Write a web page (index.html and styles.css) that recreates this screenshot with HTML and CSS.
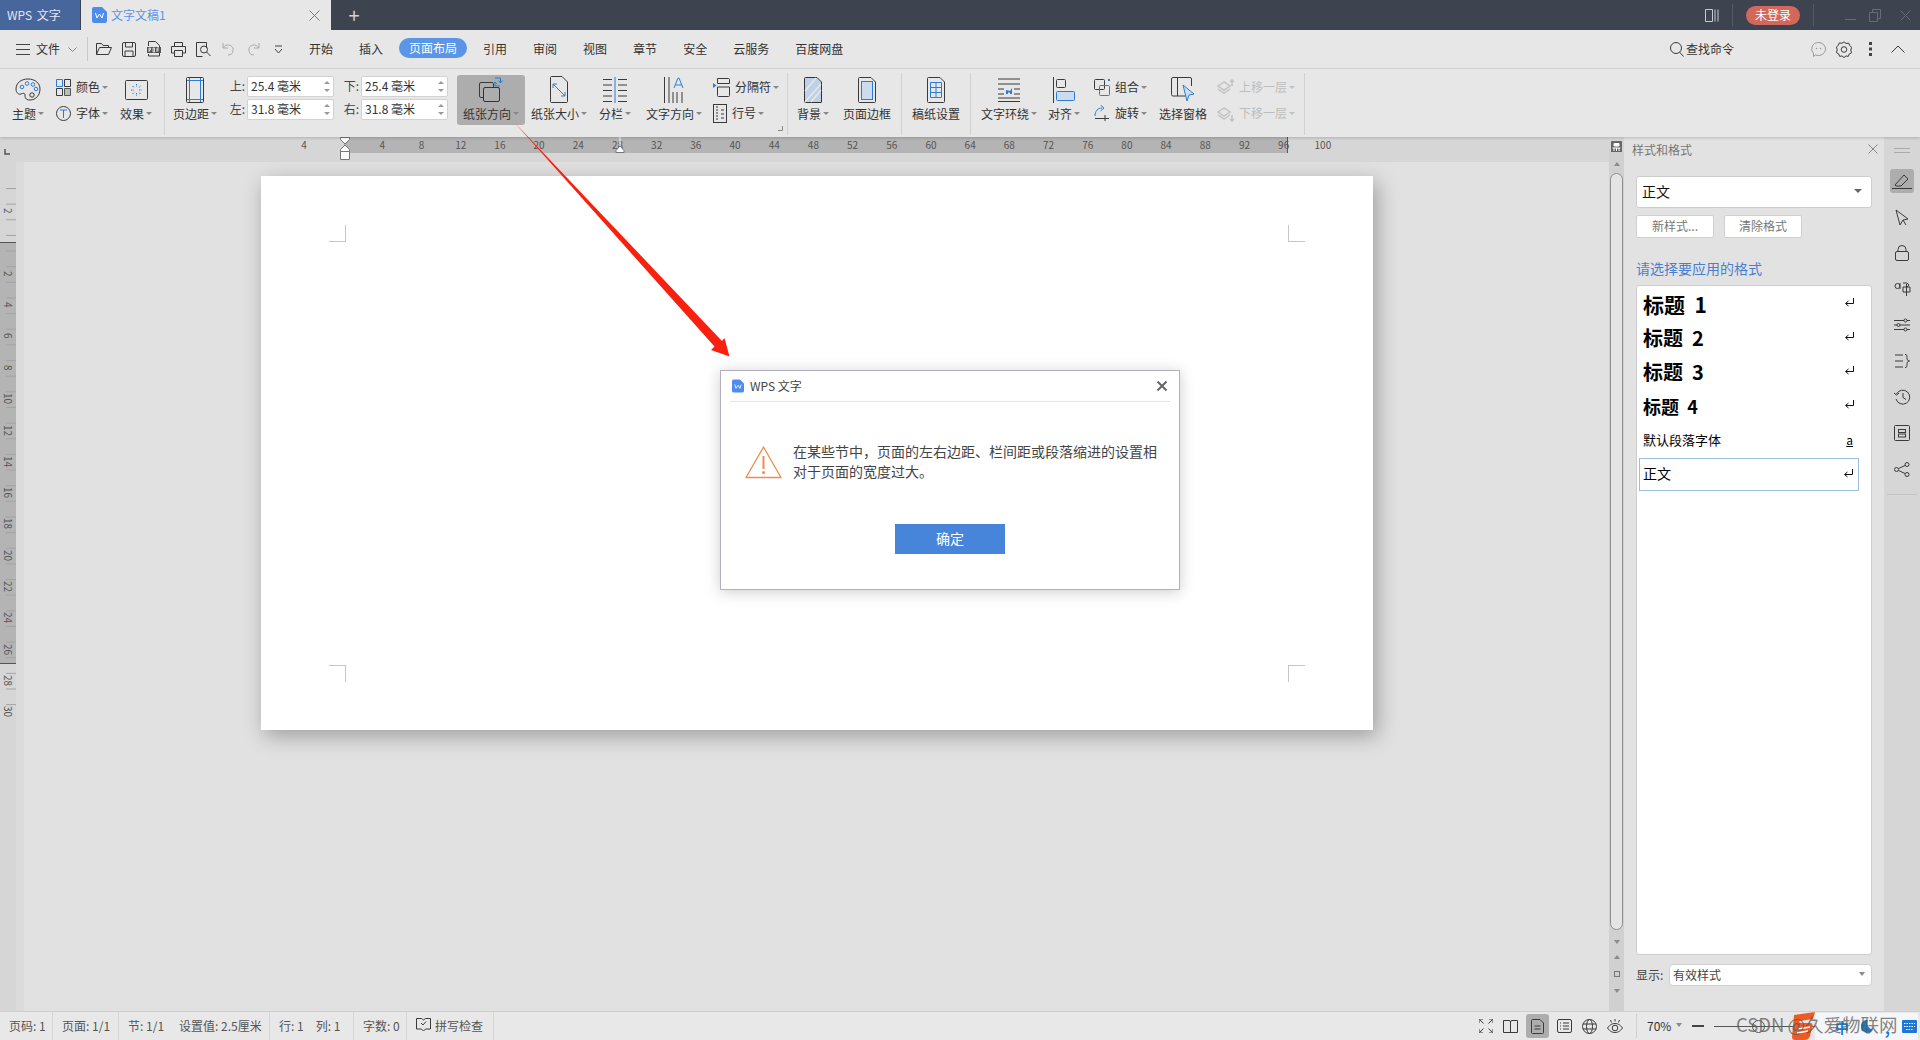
FILE: index.html
```html
<!DOCTYPE html>
<html lang="zh-CN">
<head>
<meta charset="UTF-8" />
<title>WPS 文字</title>
<link rel="stylesheet" href="styles.css">
</head>
<body>

<div class="titlebar">
  <div class="app-tab">WPS 文字</div>
  <div class="doc-tab">
    <svg class="wdoc" width="15" height="16" viewBox="0 0 15 16"><path d="M2 0h8l5 5v9a2 2 0 0 1-2 2H2a2 2 0 0 1-2-2V2a2 2 0 0 1 2-2z" fill="#4f8bec"/><path d="M3.500 6l1.500 5 2.500-4 2.500 4 1.500-5" fill="none" stroke="#fff"/></svg>
    <span class="doc-name">文字文稿1</span>
    <svg class="doc-close" width="11" height="11" viewBox="0 0 11 11"><path d="M.5.5l10 10M10.500.5l-10 10" stroke="#777" fill="none"/></svg>
  </div>
  <div class="new-tab">+</div>
  <div class="title-right">
    <svg width="14" height="15" viewBox="0 0 14 15"><path d="M.5 1.500h7v12h-7zM10 1.500v12M13 1.500v12" fill="none" stroke="#c6c9d0"/></svg>
    <i class="title-sep sep-a"></i>
    <div class="login">未登录</div>
    <i class="title-sep sep-b"></i>
    <svg width="11" height="11" viewBox="0 0 11 11"><path d="M0 9.500h11" stroke="#666b77"/></svg>
    <svg class="win-b" width="12" height="13" viewBox="0 0 12 13"><path d="M.5 3.500h8v9h-8zM3.500 3V.5h8v9H9" fill="none" stroke="#666b77"/></svg>
    <svg class="win-c" width="11" height="11" viewBox="0 0 11 11"><path d="M.5.5l10 10M10.500.5l-10 10" stroke="#666b77" fill="none"/></svg>
  </div>
</div>

<div class="menubar">
  <svg class="hamb" width="14" height="11" viewBox="0 0 14 11"><path d="M0 .5h14M0 5.500h14M0 10.500h14" stroke="#444"/></svg>
  <span class="file-label">文件</span>
  <svg class="file-chev" width="9" height="5" viewBox="0 0 9 5"><path d="M.5.5l4 4 4-4" fill="none" stroke="#888"/></svg>
  <i class="menu-sep"></i>
  <div class="quick">
    <svg width="16" height="14" viewBox="0 0 16 14"><path d="M.5 12.500V1.500h5l1.500 2h5.500v2M.5 12.500l3-7h12l-3 7z" class="ln"/></svg>
    <svg width="14" height="15" viewBox="0 0 14 15"><path d="M.5 2a1.500 1.500 0 0 1 1.500-1.500h10a1.500 1.500 0 0 1 1.500 1.500v11a1.500 1.500 0 0 1-1.500 1.500h-10a1.500 1.500 0 0 1-1.500-1.500zM3.500 1v4h7V1M3 14V9h8v5" class="ln"/></svg>
    <svg width="14" height="16" viewBox="0 0 14 16"><path d="M1.500 5V.5h7l4 4V15h-11v-2" class="ln"/><path d="M0 6h14v6H0z" fill="#555"/><path d="M2 11V7h1.500v2H2M6 7v4h1.500V7zM10 11V7h2M10 9h2" fill="none" stroke="#fff" stroke-width=".8"/></svg>
    <svg width="15" height="15" viewBox="0 0 15 15"><path d="M3.500 4.500V.5h8v4M3.500 11H.5V4.500h14V11h-3M3.500 8.500h8v6h-8z" class="ln"/></svg>
    <svg width="15" height="15" viewBox="0 0 15 15"><path d="M10.500 6V.5h-10v14h6" class="ln"/><circle cx="8" cy="7.500" r="3.500" class="ln"/><path d="M10.500 10l4 4" class="ln"/></svg>
    <svg width="13" height="14" viewBox="0 0 13 14"><path d="M1 1v5h5M1.500 6A5 5 0 1 1 6 13" fill="none" stroke="#aaa"/></svg>
    <svg width="13" height="14" viewBox="0 0 13 14"><path d="M12 1v5H7M11.500 6A5 5 0 1 0 7 13" fill="none" stroke="#aaa"/></svg>
    <svg width="9" height="9" viewBox="0 0 9 9"><path d="M1 1h7M1 4l3.500 4L8 4" fill="none" stroke="#444"/></svg>
  </div>
  <div class="tabs">
    <span>开始</span><span>插入</span><span class="tab-on">页面布局</span><span>引用</span><span>审阅</span><span>视图</span><span>章节</span><span>安全</span><span>云服务</span><span>百度网盘</span>
  </div>
  <div class="menu-right">
    <svg width="14" height="15" viewBox="0 0 14 15"><circle cx="6" cy="6" r="5.500" class="ln"/><path d="M9.500 10l4 4.500" class="ln"/></svg>
    <span class="find">查找命令</span>
    <svg class="mr-a" width="15" height="15" viewBox="0 0 15 15"><path d="M7.500.5a7 6.500 0 0 1 0 13c-1 0-2-.2-3-.6L2.500 14.500v-3A6.500 6.500 0 0 1 7.500.5z" fill="none" stroke="#999"/><circle cx="5.500" cy="6.500" r=".8" fill="#999"/><circle cx="9.500" cy="6.500" r=".8" fill="#999"/></svg>
    <svg class="mr-b" width="16" height="17" viewBox="0 0 16 17"><path d="M8 .8l2 1.700 2.700-.4 1 2.500 2 1.700-1 2.700 1 2.700-2.400 1.200-1 2.500-2.300-.5-2 1.700-2-1.700-2.300.5-1-2.500L.3 11.500l1-2.700-1-2.700 2-1.700 1-2.500 2.700.4z" class="ln"/><circle cx="8" cy="8.500" r="2.800" class="ln"/></svg>
    <svg class="mr-c" width="3" height="14" viewBox="0 0 3 14"><path d="M0 0h3v3H0zM0 5.500h3v3H0zM0 11h3v3H0z" fill="#444"/></svg>
    <svg class="mr-d" width="14" height="8" viewBox="0 0 14 8"><path d="M.5 7.500L7 1l6.500 6.500" class="ln"/></svg>
  </div>
</div>

<div class="ribbon">
  <div class="big g-theme">
    <div class="icon"><svg width="26" height="24" viewBox="0 0 26 24"><path d="M13 1C6 1 1 5 1 11c0 4 3 6 5 5s4-1 4 1 0 5 5 5c6 0 10-5 10-11S20 1 13 1z" class="ln"/><circle cx="7" cy="9" r="1.800" class="lb"/><circle cx="12" cy="5.500" r="1.800" class="lb"/><circle cx="18" cy="6.500" r="1.800" class="lb"/><circle cx="21" cy="11" r="1.800" class="lb"/><circle cx="17" cy="17" r="2.200" class="ln"/></svg></div>
    <div class="lbl">主题<b></b></div>
  </div>
  <div class="col g-color">
    <div class="row"><svg width="15" height="17" viewBox="0 0 15 17"><path d="M.5.5h6v7h-6z" class="lb"/><path d="M8.500.5h6v7h-6zM.5 9.500h6v7h-6z" class="ln"/><path d="M8.500 9.500h6v7h-6z" fill="#bbb" stroke="#555"/></svg><span>颜色</span><b></b></div>
    <div class="row"><svg width="15" height="15" viewBox="0 0 15 15"><circle cx="7.500" cy="7.500" r="7" class="ln"/><path d="M4 4h7M7.500 4v8" class="lb"/></svg><span>字体</span><b></b></div>
  </div>
  <div class="big g-effect">
    <div class="icon"><svg width="23" height="20" viewBox="0 0 23 20"><rect x=".5" y=".5" width="22" height="19" rx="1" class="ln"/><path d="M11.500 4v3M11.500 13v3M6 10h3M14 10h3M7.500 6l2 2M15.500 6l-2 2M7.500 14l2-2M15.500 14l-2-2" class="lb" stroke-dasharray="1.500 1"/></svg></div>
    <div class="lbl">效果<b></b></div>
  </div>
  <i class="vsep s-1"></i>
  <div class="big g-margin">
    <div class="icon"><svg width="18" height="26" viewBox="0 0 18 26"><rect x=".5" y=".5" width="17" height="25" rx="1" class="ln"/><path d="M3.500 1v24M14.500 1v24M1 3.500h16M1 22.500h16" class="lb"/></svg></div>
    <div class="lbl">页边距<b></b></div>
  </div>
  <div class="margins">
    <label>上:</label><div class="spin">25.4 毫米<em></em></div>
    <label>下:</label><div class="spin">25.4 毫米<em></em></div>
    <label>左:</label><div class="spin">31.8 毫米<em></em></div>
    <label>右:</label><div class="spin">31.8 毫米<em></em></div>
  </div>
  <div class="big g-orient on">
    <div class="icon"><svg width="24" height="26" viewBox="0 0 24 26"><rect x=".5" y="5.500" width="14" height="15" rx="1.500" class="ln"/><rect x="4.500" y="10.500" width="16" height="14" rx="1.500" fill="#adadad" stroke="#333"/><path d="M16 1h5.500v5M19.500 3.500l2 2.500 2-2.500M21 9h-5V5M14 7l2-2 2 2" class="lb"/></svg></div>
    <div class="lbl">纸张方向<b></b></div>
  </div>
  <div class="big g-size">
    <div class="icon"><svg width="18" height="27" viewBox="0 0 18 27"><path d="M.5 1.500a1 1 0 0 1 1-1H12l5.500 5.500v19.500a1 1 0 0 1-1 1h-15a1 1 0 0 1-1-1z" class="ln"/><path d="M3 8l12 12M3 8v4M3 8h4M15 20v-4M15 20h-4" class="lb"/></svg></div>
    <div class="lbl">纸张大小<b></b></div>
  </div>
  <div class="big g-cols">
    <div class="icon"><svg width="24" height="26" viewBox="0 0 24 26"><path d="M0 2.500h9M0 8h9M0 13.500h9M0 19h9M0 24.500h9M15 2.500h9M15 8h9M15 13.500h9M15 19h9M15 24.500h9" class="ln"/><path d="M12 0v26" class="lb"/></svg></div>
    <div class="lbl">分栏<b></b></div>
  </div>
  <div class="big g-dir">
    <div class="icon"><svg width="20" height="26" viewBox="0 0 20 26"><path d="M.5 0v26M5 0v26M13 15v11M18 15v11M9 15v11" class="ln"/><path d="M10 11l4-10h1l4 10M11.500 8h6" class="lb"/></svg></div>
    <div class="lbl">文字方向<b></b></div>
  </div>
  <div class="col g-break">
    <div class="row"><svg width="17" height="19" viewBox="0 0 17 19"><path d="M4.500.5h11a1 1 0 0 1 1 1v4h-12zM4.500 9h12v8.500a1 1 0 0 1-1 1h-10a1 1 0 0 1-1-1z" class="ln"/><path d="M0 5l3.500 2.500L0 10z" fill="#2b7cd3"/></svg><span>分隔符</span><b></b></div>
    <div class="row"><svg width="14" height="19" viewBox="0 0 14 19"><rect x=".5" y=".5" width="13" height="18" class="ln"/><path d="M3 3h2M3 6h2M3 9h2M3 12h2M3 15h2M8 6h3M8 10h3M8 14h3" class="ln"/></svg><span>行号</span><b></b></div>
    <svg class="launcher" width="5" height="5" viewBox="0 0 5 5"><path d="M4.500 0v4.500H0" fill="none" stroke="#888"/></svg>
  </div>
  <i class="vsep s-2"></i>
  <div class="big g-bg">
    <div class="icon"><svg width="18" height="26" viewBox="0 0 18 26"><path d="M.5 1.500a1 1 0 0 1 1-1H13l4.500 4.500v20a.5.5 0 0 1-.5.500H1.500a1 1 0 0 1-1-1z" fill="#bfd1e6" stroke="#333"/><path d="M1 14L12 1M1 25L17 7M7 25l10-12" stroke="#e8e8e8" stroke-width="1.500"/></svg></div>
    <div class="lbl">背景<b></b></div>
  </div>
  <div class="big g-border">
    <div class="icon"><svg width="18" height="26" viewBox="0 0 18 26"><path d="M.5 1.500a1 1 0 0 1 1-1H13l4.500 4.500v19.500a1 1 0 0 1-1 1h-15a1 1 0 0 1-1-1z" class="ln"/><rect x="3.500" y="4.500" width="11" height="18" fill="#cbdcee" stroke="#2b7cd3"/></svg></div>
    <div class="lbl">页面边框</div>
  </div>
  <i class="vsep s-3"></i>
  <div class="big g-paper">
    <div class="icon"><svg width="18" height="26" viewBox="0 0 18 26"><path d="M.5 1.500a1 1 0 0 1 1-1H13l4.500 4.500v19.500a1 1 0 0 1-1 1h-15a1 1 0 0 1-1-1z" class="ln"/><path d="M3.500 5.500h11v15h-11zM3.500 10.500h11M3.500 15.500h11M9 5.500v15" class="lb"/></svg></div>
    <div class="lbl">稿纸设置</div>
  </div>
  <i class="vsep s-4"></i>
  <div class="big g-wrap">
    <div class="icon"><svg width="22" height="24" viewBox="0 0 22 24"><path d="M0 1h22M0 6h22M0 11h6M16 11h6M0 16h6M16 16h6M0 20h22M0 23.500h22" class="ln"/><path d="M8 16v-4l4 1 2-3v6h-2v-1.500H10V16z" fill="#2b7cd3"/></svg></div>
    <div class="lbl">文字环绕<b></b></div>
  </div>
  <div class="big g-align">
    <div class="icon"><svg width="22" height="26" viewBox="0 0 22 26"><path d="M.5 0v26" class="ln"/><rect x="3.500" y="2.500" width="9" height="8" rx="1" class="ln"/><rect x="3.500" y="14.500" width="18" height="9" rx="1" fill="#cbdcee" stroke="#2b7cd3"/></svg></div>
    <div class="lbl">对齐<b></b></div>
  </div>
  <div class="col g-group">
    <div class="row"><svg width="16" height="17" viewBox="0 0 16 17"><rect x=".5" y=".5" width="10" height="10" rx="1" class="ln"/><rect x="5.500" y="6.500" width="10" height="10" rx="1" class="lb"/><path d="M14 0h2v2h-2z" fill="#2b7cd3"/></svg><span>组合</span><b></b></div>
    <div class="row"><svg width="16" height="17" viewBox="0 0 16 17"><path d="M1 11C1 6 4 3 8 3" class="lb"/><path d="M6.500 0L10 3 6.500 6" class="lb"/><path d="M1 13.500h14M11 10v6" class="ln"/></svg><span>旋转</span><b></b></div>
  </div>
  <div class="big g-pane">
    <div class="icon"><svg width="24" height="26" viewBox="0 0 24 26"><path d="M15 19H2a1.500 1.500 0 0 1-1.500-1.500V2A1.500 1.500 0 0 1 2 .5h17A1.500 1.500 0 0 1 20.500 2v7M6.500 1v18" class="ln"/><path d="M12 8l11 9-5 1-2 6z" fill="#cbdcee" stroke="#2b7cd3"/></svg></div>
    <div class="lbl">选择窗格</div>
  </div>
  <div class="col g-layer">
    <div class="row off"><svg width="17" height="17" viewBox="0 0 17 17"><path d="M7 3L1 7l6 4 6-4zM1 10l6 4 6-4M15 1v6M13 3l2-2 2 2" fill="none" stroke="#c2c2c2" stroke-width="1.500"/></svg><span>上移一层</span><b></b></div>
    <div class="row off"><svg width="17" height="17" viewBox="0 0 17 17"><path d="M7 3L1 7l6 4 6-4zM1 10l6 4 6-4M15 10v6M13 14l2 2 2-2" fill="none" stroke="#c2c2c2" stroke-width="1.500"/></svg><span>下移一层</span><b></b></div>
  </div>
  <i class="vsep s-5"></i>
</div>

<div class="workspace">
  <div class="editor">
    <div class="hruler">
      <div class="hnums"><span>4</span><span></span><span>4</span><span>8</span><span>12</span><span>16</span><span>20</span><span>24</span><span>28</span><span>32</span><span>36</span><span>40</span><span>44</span><span>48</span><span>52</span><span>56</span><span>60</span><span>64</span><span>68</span><span>72</span><span>76</span><span>80</span><span>84</span><span>88</span><span>92</span><span>96</span><span>100</span></div>
      <svg class="tabmark" width="6" height="6" viewBox="0 0 6 6"><path d="M1 0v5h5" fill="none" stroke="#555" stroke-width="1.500"/></svg>
      <svg class="indent-a" width="10" height="23" viewBox="0 0 10 23"><path d="M.5.5h9v2L5 7 .5 2.500zM.5 12.500L5 8l4.500 4.500v2h-9zM.5 14.500h9v8h-9z" fill="#fff" stroke="#777"/></svg>
      <svg class="indent-b" width="10" height="16" viewBox="0 0 10 16"><path d="M5 0v9" stroke="#fff"/><path d="M1 15.500v-2L5 9l4 4.500v2z" fill="#fff" stroke="#777"/></svg>
    </div>
    <div class="main">
      <div class="vruler">
        <div class="vnums"><span>2</span><span></span><span>2</span><span>4</span><span>6</span><span>8</span><span>10</span><span>12</span><span>14</span><span>16</span><span>18</span><span>20</span><span>22</span><span>24</span><span>26</span><span>28</span><span>30</span></div>
      </div>
      <div class="doc">
        <div class="page">
          <div class="corners top"><i class="c-tl"></i><i class="c-tr"></i></div>
          <div class="corners bottom"><i class="c-bl"></i><i class="c-br"></i></div>
        </div>
      </div>
    </div>
  </div>

  <div class="scroll">
    <div class="split"><svg width="11" height="12" viewBox="0 0 11 12"><rect width="11" height="12" rx="1" fill="#666"/><path d="M3 2.500h5v2.500H3zM1.500 7h8M3 7v3M5.500 7v3M8 7v3" stroke="#fff" fill="#fff"/></svg></div>
    <div class="track">
      <i class="tri up"></i>
      <div class="thumb"></div>
      <i class="tri down"></i>
      <i class="tri dbl-up"></i>
      <i class="dot"></i>
      <i class="tri dbl-down"></i>
    </div>
  </div>

  <aside class="panel">
    <div class="panel-head"><span>样式和格式</span><svg width="10" height="10" viewBox="0 0 10 10"><path d="M.5.5l9 9M9.500.5l-9 9" stroke="#888" fill="none"/></svg></div>
    <div class="style-select"><span>正文</span><i class="tri down dark"></i></div>
    <div class="panel-btns"><button>新样式...</button><button>清除格式</button></div>
    <div class="panel-title">请选择要应用的格式</div>
    <div class="style-list">
      <div class="style-row h1"><span>标题  1</span><svg width="10" height="9" viewBox="0 0 10 9"><path d="M9.500 0v5.500H2M4.500 3L1.500 5.500l3 2.500" fill="none" stroke="#111"/></svg></div>
      <div class="style-row h2"><span>标题  2</span><svg width="10" height="9" viewBox="0 0 10 9"><path d="M9.500 0v5.500H2M4.500 3L1.500 5.500l3 2.500" fill="none" stroke="#111"/></svg></div>
      <div class="style-row h3"><span>标题  3</span><svg width="10" height="9" viewBox="0 0 10 9"><path d="M9.500 0v5.500H2M4.500 3L1.500 5.500l3 2.500" fill="none" stroke="#111"/></svg></div>
      <div class="style-row h4"><span>标题  4</span><svg width="10" height="9" viewBox="0 0 10 9"><path d="M9.500 0v5.500H2M4.500 3L1.500 5.500l3 2.500" fill="none" stroke="#111"/></svg></div>
      <div class="style-row plain"><span>默认段落字体</span><u>a</u></div>
      <div class="style-row current"><span>正文</span><svg width="10" height="9" viewBox="0 0 10 9"><path d="M9.500 0v5.500H2M4.500 3L1.500 5.500l3 2.500" fill="none" stroke="#111"/></svg></div>
    </div>
    <div class="show-row"><label>显示:</label><div class="show-select"><span>有效样式</span><i class="tri down"></i></div></div>
  </aside>

  <nav class="strip">
    <div class="strip-grip"></div>
    <div class="strip-btn on"><svg width="20" height="15" viewBox="0 0 20 15"><path d="M3 11L12 1l4 4-7 7H4zM0 14.500h20" class="ln"/></svg></div>
    <div class="strip-btn"><svg width="14" height="17" viewBox="0 0 14 17"><path d="M1 1l12 9-5 1-3 5z M8 11l3 5" class="ln"/></svg></div>
    <div class="strip-btn"><svg width="14" height="16" viewBox="0 0 14 16"><rect x=".5" y="6.500" width="13" height="9" rx="1.500" class="ln"/><path d="M3 6.500V4.500a4 4 0 0 1 8 0v2" class="ln"/></svg></div>
    <div class="strip-btn"><svg width="17" height="16" viewBox="0 0 17 16"><circle cx="3.500" cy="5" r="2.500" class="ln"/><path d="M6 2v6M9 6h7v5H9zM12.500 3v12M9 2h4l2 2-2 2" class="ln"/></svg></div>
    <div class="strip-btn"><svg width="16" height="14" viewBox="0 0 16 14"><path d="M0 2.500h10M13 2.500h3M0 7h3M6 7h10M0 11.500h10M13 11.500h3" class="ln"/><circle cx="11.500" cy="2.500" r="1.500" class="ln"/><circle cx="4.500" cy="7" r="1.500" class="ln"/><circle cx="11.500" cy="11.500" r="1.500" class="ln"/></svg></div>
    <div class="strip-btn"><svg width="15" height="14" viewBox="0 0 15 14"><path d="M0 1h8M0 7h8M0 13h8M10 .5c2 0 2 1 2 3s0 3 2.500 3.500C12 7.500 12 8.500 12 10.500s0 3-2 3" class="ln"/></svg></div>
    <div class="strip-btn"><svg width="17" height="16" viewBox="0 0 17 16"><path d="M2.500 5a7 7 0 1 1-.500 5M0 4l2.500 2L5 4M9 4v4.500l3 2" class="ln"/></svg></div>
    <div class="strip-btn"><svg width="16" height="16" viewBox="0 0 16 16"><path d="M3 .5H1.500a1 1 0 0 0-1 1v13a1 1 0 0 0 1 1H3M13 .5h1.500a1 1 0 0 1 1 1v13a1 1 0 0 1-1 1H13M3 .5h10M3 15.500h10" class="ln"/><rect x="4.500" y="4.500" width="7" height="3" class="ln"/><rect x="4.500" y="9" width="7" height="3" class="ln"/></svg></div>
    <div class="strip-btn"><svg width="16" height="15" viewBox="0 0 16 15"><circle cx="2.500" cy="7.500" r="2" class="ln"/><circle cx="13" cy="2.500" r="2" class="ln"/><circle cx="13" cy="12.500" r="2" class="ln"/><path d="M4.500 6.500l6.500-3M4.500 8.500l6.500 3" class="ln"/></svg></div>
    <i class="strip-sep"></i>
  </nav>
</div>

<footer class="statusbar">
  <div class="status-left">
    <div>页码: 1</div>
    <div>页面: 1/1</div>
    <div class="pair wide"><span>节: 1/1</span><span>设置值: 2.5厘米</span></div>
    <div class="pair"><span>行: 1</span><span>列: 1</span></div>
    <div>字数: 0</div>
    <div class="spell"><svg width="15" height="14" viewBox="0 0 15 14"><path d="M.5.500h5L7.500 2l2-1.500h5v10.500h-5l-2 2-2-2h-5z" class="ln"/><path d="M5 5l2 2 3-3.500" class="ln"/></svg><span>拼写检查</span></div>
  </div>
  <div class="status-right">
    <svg width="14" height="14" viewBox="0 0 14 14"><path d="M0 4V0h4M10 0h4v4M14 10v4h-4M4 14H0v-4M1 1l3.500 3.500M13 1L9.500 4.500M13 13L9.500 9.500M1 13l3.500-3.500" class="ln"/></svg>
    <svg width="15" height="13" viewBox="0 0 15 13"><path d="M.5.500h5.500a1.500 1.500 0 0 1 1.500 1.500 1.500 1.500 0 0 1 1.500-1.500h5.500v12H.5zM7.500 2v10.500" class="ln"/></svg>
    <div class="view-on"><svg width="13" height="15" viewBox="0 0 13 15"><path d="M1.500.500H9L12.500 4v9.500a1 1 0 0 1-1 1h-10a1 1 0 0 1-1-1v-12a1 1 0 0 1 1-1zM3.500 7h6M3.500 10h6" class="ln"/></svg></div>
    <svg width="15" height="14" viewBox="0 0 15 14"><rect x=".5" y=".5" width="14" height="13" rx="1.500" class="ln"/><path d="M3 4h1M3 7h1M3 10h1M6 4h6M6 7h6M6 10h6" class="ln"/></svg>
    <svg width="15" height="15" viewBox="0 0 15 15"><circle cx="7.500" cy="7.500" r="7" class="ln"/><ellipse cx="7.500" cy="7.500" rx="3" ry="7" class="ln"/><path d="M1 5h13M1 10h13" class="ln"/></svg>
    <svg width="16" height="14" viewBox="0 0 16 14"><path d="M.5 9C3 5.500 5.500 4.500 8 4.500s5 1 7.500 4.500C13 12.500 10.500 13.500 8 13.500S3 12.500.5 9z" class="ln"/><circle cx="8" cy="9" r="2.800" class="ln"/><path d="M8 0v2.500M3.500 1l1 2.500M12.500 1l-1 2.500" class="ln"/></svg>
    <i class="st-sep"></i>
    <div class="zoom-val">70%<i class="tri down"></i></div>
    <i class="zoom-minus"></i>
    <div class="slider"><i></i></div>
  </div>
  <div class="watermark">
    <div class="ime">
      <span class="ime-zh">中</span>
      <svg width="12" height="13" viewBox="0 0 12 13"><path d="M7 0a6.500 6.500 0 1 0 5 9.500A6.500 6.500 0 0 1 7 0z" fill="#1c78d4"/></svg>
      <span class="ime-dot">,</span>
      <svg width="15" height="13" viewBox="0 0 15 13"><rect width="15" height="13" rx="1" fill="#1c78d4"/><path d="M2 3.500h11M2 6.500h11M4 9.500h7" stroke="#fff" stroke-dasharray="1.500 1"/></svg>
    </div>
    <svg class="csdn-logo" width="25" height="28" viewBox="0 0 25 28"><path d="M2 3l21-3-2 7-13 2c-2 .5-1 2 1 2h9c3 0 3 2 2 5l-2 8c-1 3-3 4-6 4H3c-2 0-3-1-3-3z" fill="#ee5a24"/><path d="M6 17l12-2M5 21l11-2" stroke="#fff" stroke-width="1.500"/></svg>
    <span class="wm-text">CSDN @久爱物联网</span>
  </div>
</footer>

<!-- the message box and the red annotation sit on top of everything -->
<div class="dialog">
  <div class="dlg-head">
    <svg width="12" height="14" viewBox="0 0 15 16"><path d="M2 0h8l5 5v9a2 2 0 0 1-2 2H2a2 2 0 0 1-2-2V2a2 2 0 0 1 2-2z" fill="#4f8bec"/><path d="M3.500 6l1.500 5 2.500-4 2.500 4 1.500-5" fill="none" stroke="#fff"/></svg>
    <span class="dlg-title">WPS 文字</span>
    <svg class="dlg-close" width="10" height="10" viewBox="0 0 10 10"><path d="M.5.5l9 9M9.500.5l-9 9" stroke="#666" stroke-width="2" fill="none"/></svg>
  </div>
  <div class="dlg-body">
    <svg width="37" height="33" viewBox="0 0 37 33"><path d="M18.500 1L36 31.500H1z" fill="none" stroke="#ee8c4e" stroke-width="1.300" stroke-linejoin="round"/><path d="M18.500 10v13" stroke="#ee8c4e" stroke-width="2"/><circle cx="18.500" cy="26.500" r="1.500" fill="#ee8c4e"/></svg>
    <p>在某些节中，页面的左右边距、栏间距或段落缩进的设置相对于页面的宽度过大。</p>
  </div>
  <div class="dlg-foot"><button>确定</button></div>
</div>

<svg class="annot" width="240" height="250" viewBox="510 118 240 250"><path d="M514 122L722 341 724.500 338 729.500 356.500 711 350 714.500 346.500z" fill="#f8210f"/></svg>

</body>
</html>
```

FILE: styles.css
```css
* {
  box-sizing: border-box;
}

html, body {
  margin: 0;
  height: 100%;
  overflow: hidden;
}

body {
  position: relative;
  width: 1920px;
  height: 1040px;
  display: flex;
  flex-direction: column;
  background: #e1e1e1;
  color: #333;
  font-family: "Noto Sans CJK SC", "Noto Sans", sans-serif;
  font-size: 12px;
}

i, b, em {
  display: block;
  font-style: normal;
}

svg {
  display: block;
  flex: none;
}

.ln {
  fill: none;
  stroke: #3a3a3a;
}

.lb {
  fill: none;
  stroke: #2b7cd3;
}

/* title bar */
.titlebar {
  display: flex;
  align-items: stretch;
  height: 30px;
  flex: none;
  background: #3e4350;
}

.app-tab {
  width: 80px;
  padding-left: 7px;
  line-height: 29px;
  background: #47669b;
  color: #e4e8f0;
  word-spacing: 2px;
}

.doc-tab {
  display: flex;
  align-items: center;
  width: 250px;
  margin-left: 1px;
  padding: 0 11px;
  background: #e7e7e7;
}

.doc-name {
  margin: 0 0 2px 4px;
  color: #5f92e6;
}

.doc-close {
  margin-left: auto;
}

.new-tab {
  width: 46px;
  text-align: center;
  color: #d0d3da;
  font-size: 20px;
  line-height: 29px;
}

.title-right {
  display: flex;
  align-items: center;
  margin-left: auto;
  padding-right: 9px;
}

.title-sep {
  width: 1px;
  height: 22px;
  background: #555a67;
}

.sep-a {
  margin: 0 13px;
}

.sep-b {
  margin: 0 31px 0 13px;
}

.login {
  width: 54px;
  height: 19px;
  border-radius: 10px;
  background: #d2685c;
  color: #fff;
  text-align: center;
  line-height: 18px;
}

.win-b {
  margin-left: 13px;
}

.win-c {
  margin-left: 19px;
}

/* menu row */
.menubar {
  display: flex;
  align-items: center;
  height: 39px;
  flex: none;
  padding-left: 16px;
  background: #e7e7e7;
  border-bottom: 1px solid #d6d6d6;
}

.file-label {
  margin: 0 0 2px 6px;
}

.file-chev {
  margin-left: 8px;
}

.menu-sep {
  width: 1px;
  height: 24px;
  margin-left: 10px;
  background: #c8c8c8;
}

.quick {
  display: grid;
  grid-template-columns: repeat(8, 25px);
  justify-items: center;
  align-items: center;
  margin-left: 3px;
}

.tabs {
  display: flex;
  align-items: center;
  gap: 26px;
  margin: 0 0 2px 18px;
}

.tab-on {
  margin: 0 -10px;
  padding: 0 10px;
  height: 20px;
  line-height: 19px;
  border-radius: 10px;
  background: #5b95e8;
  color: #fff;
}

.menu-right {
  display: flex;
  align-items: center;
  margin-left: auto;
  padding-right: 15px;
}

.find {
  margin: 0 0 2px 2px;
}

.mr-a {
  margin-left: 77px;
}

.mr-b {
  margin-left: 10px;
}

.mr-c {
  margin-left: 17px;
}

.mr-d {
  margin-left: 19px;
}

/* ribbon */
.ribbon {
  position: relative;
  z-index: 2;
  display: flex;
  align-items: flex-start;
  height: 68px;
  flex: none;
  padding: 6px 0 0 10px;
  background: #e7e7e7;
  box-shadow: 0 1px 3px rgba(0, 0, 0, 0.18);
}

.big {
  display: flex;
  flex-direction: column;
  align-items: center;
  height: 50px;
  border-radius: 3px;
}

.big.on {
  background: #adadad;
}

.icon {
  display: flex;
  align-items: center;
  justify-content: center;
  height: 29px;
}

.lbl {
  display: flex;
  align-items: center;
  height: 18px;
  white-space: nowrap;
}

.lbl b, .row b {
  width: 0;
  height: 0;
  margin-left: 2px;
  border: 3px solid transparent;
  border-top-color: #888;
  border-bottom: 0;
}

.col {
  position: relative;
  display: flex;
  flex-direction: column;
  gap: 4px;
  padding-top: 1px;
}

.row {
  display: flex;
  align-items: center;
  height: 22px;
  white-space: nowrap;
}

.row span {
  margin: 0 0 2px 5px;
}

.row.off span {
  color: #bdbdbd;
}

.row.off b {
  border-top-color: #c2c2c2;
}

.launcher {
  position: absolute;
  right: 0;
  bottom: -7px;
}

.vsep {
  width: 1px;
  height: 62px;
  margin-top: -2px;
  background: #d2d2d2;
}

.g-theme { width: 36px; }
.g-color { width: 64px; margin-left: 10px; }
.g-effect { width: 32px; }
.s-1 { margin-left: 12px; }
.g-margin { width: 44px; margin-left: 8px; }
.g-orient { width: 68px; margin-left: 9px; }
.g-size { width: 58px; margin-left: 5px; }
.g-cols { width: 36px; margin-left: 9px; }
.g-dir { width: 60px; margin-left: 11px; }
.g-break { width: 70px; margin-left: 9px; }
.s-2 { margin-left: 4px; }
.g-bg { width: 36px; margin-left: 7px; }
.g-border { width: 52px; margin-left: 10px; }
.s-3 { margin-left: 8px; }
.g-paper { width: 52px; margin-left: 8px; }
.s-4 { margin-left: 8px; }
.g-wrap { width: 60px; margin-left: 8px; }
.g-align { width: 36px; margin-left: 7px; }
.g-group { width: 62px; margin-left: 12px; }
.g-pane { width: 52px; margin-left: 1px; }
.g-layer { width: 80px; margin-left: 8px; }
.s-5 { margin-left: 7px; }

.margins {
  display: grid;
  grid-template-columns: 19px 87px 27px 87px;
  grid-auto-rows: 21px;
  row-gap: 2px;
  margin: 1px 0 0 11px;
}

.margins label {
  padding-right: 2px;
  text-align: right;
  line-height: 19px;
  color: #444;
}

.spin {
  position: relative;
  padding-left: 3px;
  line-height: 18px;
  background: #fff;
  border: 1px solid #d2d2d2;
  border-radius: 2px;
}

.spin em {
  position: absolute;
  right: 3px;
  top: 4px;
  width: 0;
  height: 0;
  border: 3px solid transparent;
  border-bottom: 3px solid #999;
  border-top: 0;
}

.spin em::after {
  content: "";
  position: absolute;
  left: -3px;
  top: 8px;
  border: 3px solid transparent;
  border-top: 3px solid #999;
  border-bottom: 0;
}

/* work area */
.workspace {
  display: flex;
  flex: 1;
  min-height: 0;
}

.editor {
  display: flex;
  flex-direction: column;
  width: 1609px;
}

.hruler {
  position: relative;
  height: 25px;
  flex: none;
  background:
    linear-gradient(#55585f, #55585f) 1287px 0 / 1px 16px no-repeat,
    linear-gradient(#b4b4b4, #b4b4b4) 344px 0 / 943px 16px no-repeat,
    #d6d6d6;
}

.hnums {
  display: flex;
  height: 16px;
  padding-left: 284.4px;
}

.hnums span {
  flex: none;
  width: 39.2px;
  text-align: center;
  font-size: 10px;
  line-height: 16px;
  color: #555;
}

.tabmark {
  position: absolute;
  left: 4px;
  top: 12px;
}

.indent-a {
  position: absolute;
  left: 340px;
  top: 0;
}

.indent-b {
  position: absolute;
  left: 615px;
  top: 0;
}

.main {
  display: flex;
  flex: 1;
  min-height: 0;
}

.vruler {
  width: 24px;
  flex: none;
  background:
    linear-gradient(#555, #555) 0 80px / 16px 1px no-repeat,
    linear-gradient(#555, #555) 0 501px / 16px 1px no-repeat,
    linear-gradient(#b4b4b4, #b4b4b4) 0 80px / 16px 421px no-repeat,
    linear-gradient(#dbdbdb, #dbdbdb) 16px 0 / 8px 100% no-repeat,
    #d6d6d6;
}

.vnums {
  display: flex;
  flex-direction: column;
  height: 529px;
  margin-top: 26px;
  padding-top: 7.35px;
  background: linear-gradient(#a2a2a2 1px, transparent 1px) 6px 0 / 10px 15.65px repeat-y;
}

.vnums span {
  flex: none;
  display: flex;
  align-items: center;
  justify-content: center;
  width: 16px;
  height: 31.3px;
  writing-mode: vertical-rl;
  font-size: 10px;
  color: #555;
}

.doc {
  flex: 1;
  padding: 14px 0 0 237px;
}

.page {
  display: flex;
  flex-direction: column;
  justify-content: space-between;
  width: 1112px;
  height: 554px;
  padding: 49px 69px 48px;
  background: #fff;
  box-shadow: 4px 6px 20px rgba(0, 0, 0, 0.3);
}

.corners {
  display: flex;
  justify-content: space-between;
  margin: 0 -1px;
}

.corners i {
  width: 17px;
  height: 17px;
  border: 0 solid #c6c6c6;
}

.c-tl { border-right-width: 1px !important; border-bottom-width: 1px !important; }
.c-tr { border-left-width: 1px !important; border-bottom-width: 1px !important; }
.c-bl { border-right-width: 1px !important; border-top-width: 1px !important; }
.c-br { border-left-width: 1px !important; border-top-width: 1px !important; }

/* scrollbar between document and panel */
.scroll {
  display: flex;
  flex-direction: column;
  width: 15px;
  flex: none;
  background: #d6d6d6;
}

.split {
  height: 15px;
  padding: 4px 0 0 2px;
  flex: none;
}

.track {
  display: flex;
  flex-direction: column;
  align-items: center;
  flex: 1;
  padding-top: 10px;
  background: #d0d0d0;
}

.tri {
  width: 0;
  height: 0;
  border: 3.5px solid transparent;
}

.tri.up {
  border-bottom: 4px solid #8a8a8a;
  border-top: 0;
}

.tri.down {
  border-top: 4px solid #8a8a8a;
  border-bottom: 0;
}

.tri.dark {
  border-width: 4px 4px 0;
  border-top-color: #666;
}

.thumb {
  width: 13px;
  height: 757px;
  margin-top: 7px;
  background: #e4e4e4;
  border: 1px solid #8e8e8e;
  border-radius: 7px;
}

.track .down {
  margin-top: 10px;
}

.dbl-up {
  margin-top: 11px;
  border-bottom: 4px solid #8a8a8a;
  border-top: 0;
  box-shadow: 0 5px 0 -3px #8a8a8a;
}

.dot {
  width: 6px;
  height: 6px;
  margin-top: 12px;
  border: 1px solid #777;
}

.dbl-down {
  margin-top: 12px;
  border-top: 4px solid #8a8a8a;
  border-bottom: 0;
  box-shadow: 0 -5px 0 -3px #8a8a8a;
}

/* styles panel */
.panel {
  display: flex;
  flex-direction: column;
  width: 260px;
  flex: none;
  padding: 0 12px;
  background: #e2e2e2;
}

.panel-head {
  display: flex;
  align-items: center;
  justify-content: space-between;
  height: 26px;
  flex: none;
  margin: 0 -6px 0 -4px;
  padding-bottom: 2px;
  color: #777;
}

.style-select {
  display: flex;
  align-items: center;
  justify-content: space-between;
  height: 32px;
  flex: none;
  margin-top: 13px;
  padding: 0 9px 2px 5px;
  background: #fff;
  border: 1px solid #cdcdcd;
  border-radius: 3px;
  font-size: 14px;
  color: #111;
}

.panel-btns {
  display: flex;
  gap: 10px;
  margin-top: 7px;
}

.panel-btns button {
  width: 78px;
  height: 23px;
  padding: 0 0 2px;
  background: #fff;
  border: 1px solid #d0d0d0;
  border-radius: 2px;
  font: 12px "Noto Sans CJK SC", sans-serif;
  color: #777;
}

.panel-title {
  margin-top: 21px;
  height: 20px;
  line-height: 18px;
  font-size: 14px;
  color: #4a7fd0;
  white-space: nowrap;
}

.style-list {
  flex: none;
  height: 670px;
  margin-top: 6px;
  padding-top: 2px;
  background: #fff;
  border: 1px solid #cdcdcd;
  border-radius: 3px;
}

.style-row {
  display: flex;
  align-items: center;
  justify-content: space-between;
  width: 220px;
  height: 34px;
  margin-left: 2px;
  padding: 0 5px 0 4px;
  color: #000;
  white-space: pre;
}

.style-row span {
  margin-bottom: 3px;
}

.style-row svg {
  margin-bottom: 6px;
}

.style-row.h1 { font-size: 21px; font-weight: 700; }
.style-row.h2 { font-size: 20px; font-weight: 700; }
.style-row.h3 { font-size: 20px; font-weight: 700; }
.style-row.h4 { font-size: 18px; font-weight: 700; }
.style-row.plain { font-size: 13px; }

.style-row u {
  font-size: 12px;
  margin: 0 1px 4px 0;
}

.style-row.current {
  height: 33px;
  padding: 0 5px 0 3px;
  border: 1px solid #9bbde2;
  font-size: 14px;
}

.style-row.current svg {
  margin-bottom: 3px;
}

.show-row {
  display: flex;
  align-items: center;
  margin-top: 9px;
}

.show-row label {
  width: 33px;
  margin-bottom: 2px;
  color: #444;
}

.show-select {
  display: flex;
  align-items: center;
  justify-content: space-between;
  width: 203px;
  height: 22px;
  padding: 0 6px 2px 3px;
  background: #fff;
  border: 1px solid #d0d0d0;
  border-radius: 4px;
  color: #444;
}

.strip {
  display: flex;
  flex-direction: column;
  align-items: center;
  width: 36px;
  flex: none;
  background: #d6d6d6;
}

.strip-grip {
  width: 16px;
  height: 5px;
  margin: 11px 0 10px;
  border-top: 1px solid #aaa;
  border-bottom: 1px solid #aaa;
}

.strip-btn {
  display: flex;
  align-items: center;
  justify-content: center;
  width: 36px;
  height: 36px;
  flex: none;
}

.strip-btn.on {
  background: #adadad;
  width: 24px;
  height: 24px;
  margin: 6px 0;
  border-radius: 3px;
}

.strip-sep {
  width: 30px;
  height: 1px;
  margin-top: 7px;
  background: #c4c4c4;
}

/* status bar */
.statusbar {
  position: relative;
  display: flex;
  justify-content: space-between;
  align-items: center;
  height: 29px;
  flex: none;
  background: #e8e8e8;
  border-top: 1px solid #cfcfcf;
  color: #555;
}

.status-left {
  display: grid;
  grid-template-columns: 53px 66px 151px 84px 53px 87px;
  height: 100%;
}

.status-left > div {
  display: flex;
  align-items: center;
  padding: 0 0 2px 9px;
  border-right: 1px solid #d6d6d6;
  white-space: nowrap;
}

.pair {
  gap: 12px;
}

.pair.wide {
  gap: 15px;
}

.spell {
  gap: 4px;
}

.status-right {
  display: flex;
  align-items: center;
  width: 449px;
  height: 100%;
  gap: 10px;
  padding-left: 8px;
}

.view-on {
  display: flex;
  align-items: center;
  justify-content: center;
  width: 23px;
  height: 24px;
  margin: 0 -2px;
  border-radius: 3px;
  background: #adadad;
}

.st-sep {
  width: 1px;
  height: 24px;
  margin-left: 3px;
  background: #d0d0d0;
}

.zoom-val {
  display: flex;
  align-items: center;
  gap: 5px;
  margin-bottom: 2px;
  color: #333;
}

.zoom-minus {
  width: 12px;
  height: 2px;
  background: #444;
}

.slider {
  position: relative;
  width: 130px;
  height: 1px;
  background: #555;
}

.slider i {
  position: absolute;
  left: 38px;
  top: -6px;
  width: 13px;
  height: 13px;
  border-radius: 50%;
  border: 1px solid #555;
}

.watermark {
  position: absolute;
  top: 0;
  right: 0;
  width: 185px;
  height: 28px;
}

.ime {
  position: absolute;
  left: 80px;
  top: 1px;
  right: 2px;
  bottom: 0;
  display: flex;
  align-items: center;
  justify-content: space-between;
  padding: 0 1px 0 20px;
  background: #f4f6f9;
}

.ime-zh {
  color: #1c78d4;
  font-weight: 700;
  font-size: 14px;
}

.ime-dot {
  color: #1c78d4;
  font-weight: 700;
  font-size: 16px;
  line-height: 10px;
}

.csdn-logo {
  position: absolute;
  left: 57px;
  top: 0;
}

.wm-text {
  position: absolute;
  left: 1px;
  top: 0;
  font-size: 18.5px;
  line-height: 25px;
  color: rgba(90, 90, 90, 0.75);
  white-space: nowrap;
  word-spacing: -1px;
}

/* message box */
.dialog {
  position: absolute;
  left: 720px;
  top: 370px;
  width: 460px;
  height: 220px;
  padding: 0 9px;
  background: #fff;
  border: 1px solid #b1afc0;
  box-shadow: 0 2px 14px rgba(0, 0, 0, 0.2);
}

.dlg-head {
  display: flex;
  align-items: center;
  height: 31px;
  padding-left: 2px;
  border-bottom: 1px solid #e4e4e4;
}

.dlg-title {
  margin: 0 0 2px 6px;
  color: #444;
}

.dlg-close {
  margin-left: auto;
  margin-right: 3px;
}

.dlg-body {
  display: flex;
  gap: 11px;
  padding: 44px 0 0 15px;
}

.dlg-body p {
  width: 366px;
  margin: -5px 0 0;
  font-size: 14px;
  line-height: 20px;
  color: #444;
}

.dlg-foot {
  display: flex;
  justify-content: center;
  margin-top: 43px;
}

.dlg-foot button {
  width: 110px;
  height: 30px;
  padding: 0 0 2px;
  border: 0;
  background: #4685d9;
  color: #fff;
  font: 14px "Noto Sans CJK SC", sans-serif;
}

.annot {
  position: absolute;
  left: 510px;
  top: 118px;
  z-index: 3;
}
```
